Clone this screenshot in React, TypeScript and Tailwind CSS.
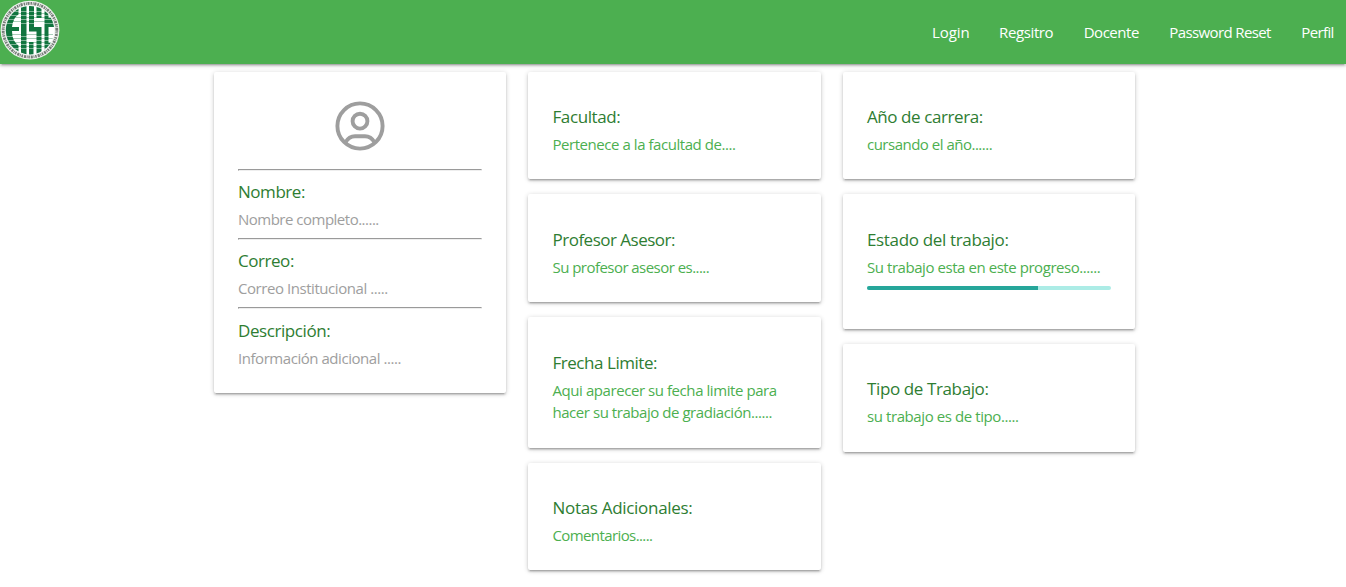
import type { ReactNode } from "react";

function Logo() {
  return (
    <svg width="60" height="60" viewBox="0 0 60 60" className="block">
      <defs>
        <clipPath id="disc">
          <circle cx="30" cy="30.2" r="24.2" />
        </clipPath>
      </defs>
      <circle cx="30" cy="30.2" r="29.4" fill="#eef2ee" />
      <circle cx="30" cy="30.2" r="26.8" fill="none" stroke="#767c78" strokeWidth="2.8" strokeDasharray="1.5 0.8 0.9 0.7 2.1 1" />
      <circle cx="30" cy="30.2" r="24.4" fill="#ffffff" />
      <g clipPath="url(#disc)">
        <g fill="#11753f">
          <path d="M4 27Q7 14 18.500 7V14.500Q13 18 12 27H19V31H12Q12 41 18.500 45.500V54Q6 46 4 27Z" />
          <path d="M21 5H26.500V56H21Z" />
          <path d="M29 5H34V27H41.500V56H36.500V31.500H29Z" />
          <path d="M36.500 5H41.500V18H36.500ZM29 42H33.500V56H29Z" />
          <path d="M44.500 9H48.500V18H53L56 27H48.500V31H44.500ZM44.500 31H48.500V43H53L49 51H44.500Z" />
        </g>
        <path
          d="M6 11.500H54M6 15.500H54M6 19.500H54M6 23.500H54M6 36.500H54M6 40.500H54M6 44.500H54M6 48.500H54"
          stroke="#ffffff"
          strokeOpacity="0.45"
          strokeWidth="1"
        />
        <path d="M14 13.500H50M10 17.500H53M8 21.500H53M7 34.500H53M8 38.500H53M10 42.500H52M13 46.500H49" stroke="#11753f" strokeOpacity="0.45" strokeWidth="0.8" />
      </g>
    </svg>
  );
}

function UserIcon() {
  return (
    <svg width="60" height="60" viewBox="0 0 60 60" fill="none" stroke="#9e9e9e" strokeWidth="3.900" className="mx-auto block">
      <circle cx="30" cy="30" r="22.600" />
      <circle cx="30" cy="25.200" r="7.400" />
      <path d="M15.300 46.500Q19 40.200 25 40.200H35Q41 40.200 44.700 46.500" />
    </svg>
  );
}

const NAV = [
  { label: "Login", css: "w-[37px] tracking-[-0.1px]" },
  { label: "Regsitro", css: "w-[54.600px] tracking-[-0.38px]" },
  { label: "Docente", css: "w-[55.700px] tracking-[-0.45px]" },
  { label: "Password Reset", css: "w-[101.900px] tracking-[-0.62px]" },
  { label: "Perfil", css: "w-[33.500px] tracking-[-0.6px]" },
];

function Title({ children, track }: { children: ReactNode; track: string }) {
  return <h2 className={`h-[30px] whitespace-nowrap text-[17px] leading-[28px] text-[#2e7d32] ${track}`}>{children}</h2>;
}

function Text({ children, track, tone = "text-[#4caf50]" }: { children: ReactNode; track: string; tone?: string }) {
  return <p className={`whitespace-nowrap text-[15px] leading-[22px] ${tone} ${track}`}>{children}</p>;
}

function Card({ children, size }: { children: ReactNode; size: string }) {
  return (
    <section
      className={`rounded-[2px] bg-white pr-6 pl-[24.400px] shadow-[0_2px_2px_0_rgba(0,0,0,0.14),0_3px_1px_-2px_rgba(0,0,0,0.12),0_1px_5px_0_rgba(0,0,0,0.2)] ${size}`}
    >
      {children}
    </section>
  );
}

function Rule() {
  return <hr className="h-0 border border-t-[#9a9a9a] border-r-[#eeeeee] border-b-[#eeeeee] border-l-[#9a9a9a]" />;
}

export default function App() {
  const gray = "text-[#9e9e9e]";
  return (
    <div className="h-[587px] w-full overflow-hidden bg-white font-['Open_Sans',sans-serif]">
      <header className="relative flex h-16 justify-between bg-[#4caf50] shadow-[0_2px_2px_0_rgba(0,0,0,0.14),0_3px_1px_-2px_rgba(0,0,0,0.12),0_1px_5px_0_rgba(0,0,0,0.2)]">
        <Logo />
        <nav className="flex gap-[30px] pr-[11.300px]">
          {NAV.map((n) => (
            <a key={n.label} className={`whitespace-nowrap text-[15px] leading-[65px] text-white ${n.css}`}>
              {n.label}
            </a>
          ))}
        </nav>
      </header>

      <main className="grid grid-cols-[292.500px_292.500px_292.500px] items-start gap-[22px] pt-2 pl-[213.600px]">
        <Card size="h-[321px] pt-6">
          <UserIcon />
          <div className="h-[13px]" />
          <Rule />
          <div className="h-[67px] pt-[7px]">
            <Title track="tracking-[-0.45px]">Nombre:</Title>
            <Text tone={gray} track="tracking-[-0.5px]">Nombre completo......</Text>
          </div>
          <Rule />
          <div className="h-[67px] pt-[7px]">
            <Title track="tracking-[-0.45px]">Correo:</Title>
            <Text tone={gray} track="tracking-[-0.44px]">Correo Institucional .....</Text>
          </div>
          <Rule />
          <div className="pt-2">
            <Title track="tracking-[-0.42px]">Descripción:</Title>
            <Text tone={gray} track="tracking-[-0.45px]">Información adicional .....</Text>
          </div>
        </Card>

        <div className="flex flex-col gap-[15px]">
          <Card size="h-[107px] pt-[31px]">
            <Title track="tracking-[-0.4px]">Facultad:</Title>
            <Text track="tracking-[-0.45px]">Pertenece a la facultad de....</Text>
          </Card>
          <Card size="h-[108px] pt-8">
            <Title track="tracking-[-0.5px]">Profesor Asesor:</Title>
            <Text track="tracking-[-0.54px]">Su profesor asesor es.....</Text>
          </Card>
          <Card size="h-[131px] pt-8">
            <Title track="tracking-[-0.46px]">Frecha Limite:</Title>
            <Text track="tracking-[-0.43px]">Aqui aparecer su fecha limite para</Text>
            <Text track="tracking-[-0.45px]">hacer su trabajo de gradiación......</Text>
          </Card>
          <Card size="h-[107px] pt-[31px]">
            <Title track="tracking-[-0.3px]">Notas Adicionales:</Title>
            <Text track="tracking-[-0.6px]">Comentarios.....</Text>
          </Card>
        </div>

        <div className="flex flex-col gap-[15px]">
          <Card size="h-[107px] pt-[31px]">
            <Title track="tracking-[-0.42px]">Año de carrera:</Title>
            <Text track="tracking-[-0.5px]">cursando el año......</Text>
          </Card>
          <Card size="h-[135px] pt-8">
            <Title track="tracking-[-0.34px]">Estado del trabajo:</Title>
            <Text track="tracking-[-0.44px]">Su trabajo esta en este progreso......</Text>
            <div className="mt-2 h-1 overflow-hidden rounded-[2px] bg-[#acece6]">
              <div className="h-full w-[70%] bg-[#26a69a]" />
            </div>
          </Card>
          <Card size="h-[108px] pt-[31px]">
            <Title track="tracking-[-0.38px]">Tipo de Trabajo:</Title>
            <Text track="tracking-[-0.41px]">su trabajo es de tipo.....</Text>
          </Card>
        </div>
      </main>
    </div>
  );
}
